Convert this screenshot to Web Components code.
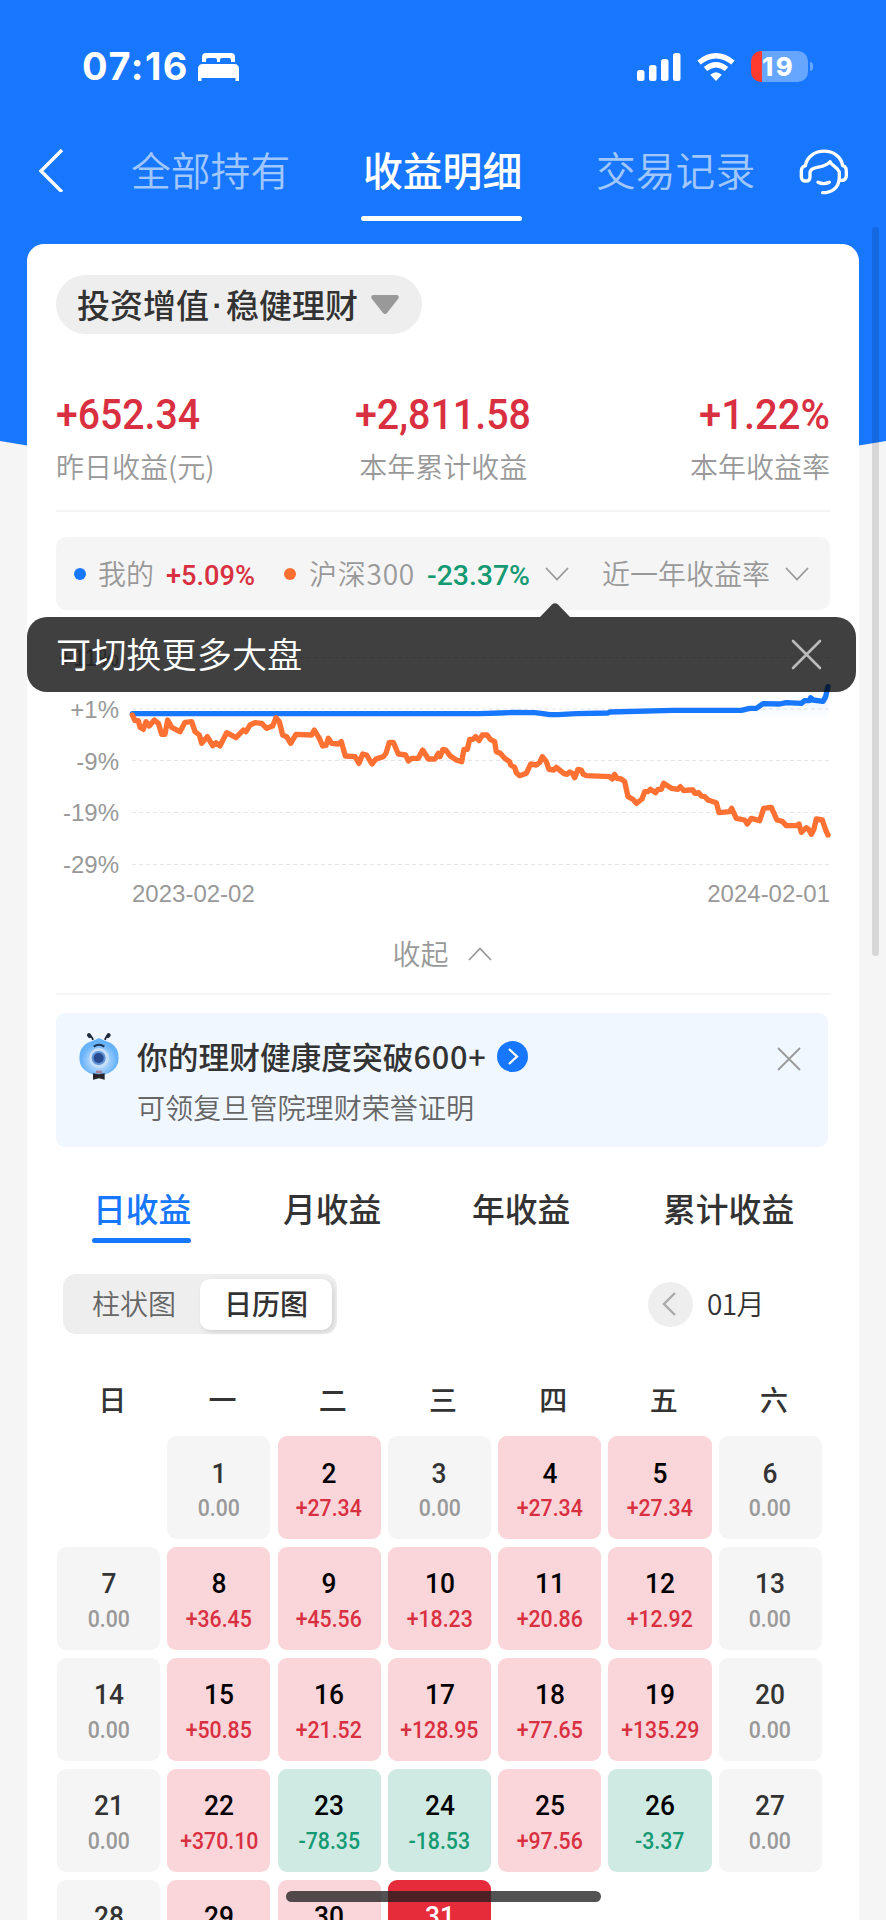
<!DOCTYPE html>
<html lang="zh-CN">
<head>
<meta charset="utf-8">
<title>收益明细</title>
<style>
html,body{margin:0;height:1920px;overflow:hidden;background:#f5f5f5}
body{font-family:"Liberation Sans","Noto Sans CJK SC",sans-serif;color:#333}
</style>
</head>
<body>
<income-page></income-page>
<script>
const CJK='"Noto Sans CJK SC",sans-serif';
const NUM='Roboto,"Noto Sans CJK SC",sans-serif';
function define(name,html,init){
  const t=document.createElement('template');
  t.innerHTML=html;
  customElements.define(name,class extends HTMLElement{
    constructor(){super();this.attachShadow({mode:'open'}).append(t.content.cloneNode(true));}
    connectedCallback(){if(init)init(this,this.shadowRoot);}
  });
}

/* Text run fitted to an advance width: by tracking, or by glyph width with "squeeze" */
define('fit-text',`<style>:host{display:inline-block;white-space:nowrap;flex:none}i{font-style:normal;display:inline-block;transform-origin:0 50%}</style><i><slot></slot></i>`,(el,r)=>{
  const w=+el.getAttribute('w'),n=[...el.textContent].length;
  const nat=el.getBoundingClientRect().width;
  if(!nat)return;
  if(el.hasAttribute('squeeze'))r.querySelector('i').style.transform=`scaleX(${(w/nat).toFixed(4)})`;
  else el.style.letterSpacing=((w-nat)/n).toFixed(3)+'px';
  el.style.width=w+'px';
});

define('status-bar',`<style>
:host{display:flex;align-items:center;height:133px;box-sizing:border-box;padding:0 73px 0 82px;color:#fff;font:750 38px/38px Inter,sans-serif}
.sp{flex:1}svg{display:block;flex:none}
.bat{position:relative;width:57px;height:31px;border-radius:10px;background:linear-gradient(90deg,#ff3b30 11px,#66a6ff 11px);font:800 25.5px/31px Inter,sans-serif;display:flex;box-sizing:border-box;padding-left:11px;margin-left:16px}
.nub{width:3px;height:9px;border-radius:0 4px 4px 0;background:#66a6ff;margin-left:2px;flex:none}
fit-text{height:40px;line-height:40px;margin-top:-1px}
.bat fit-text{height:31px;line-height:31px;margin-top:0}
</style>
<fit-text w="107">07:16</fit-text>
<svg style="margin-left:9px" width="41" height="30" viewBox="0 0 41 30" fill="#fff"><path d="M4 10V5Q4 1 8 1H33Q37 1 37 5V10H33V8Q33 6 31 6H24Q22 6 22 8V10H19V8Q19 6 17 6H10Q8 6 8 8V10Z"/><path d="M0 29V17Q0 12 5 12H36Q41 12 41 17V29H37.500V26H3.500V29Z"/></svg>
<span class="sp"></span>
<svg width="45" height="30" viewBox="0 0 45 30" fill="#fff"><rect y="18" width="7.500" height="11" rx="2.500"/><rect x="12" y="13" width="7.500" height="16" rx="2.500"/><rect x="24" y="7" width="7.500" height="22" rx="2.500"/><rect x="36" y="1" width="7.500" height="28" rx="2.500"/></svg>
<svg style="margin-left:15px" width="38" height="30" viewBox="0 0 38 30" fill="none" stroke="#fff" stroke-width="5.200"><path d="M2 10.500Q19-3 36 10.500"/><path d="M8.500 17Q19 8.500 29.500 17"/><path d="M19 29L13.200 22.800Q19 17.800 24.800 22.800Z" fill="#fff" stroke="none"/></svg>
<div class="bat"><fit-text w="33">19</fit-text></div><i class="nub"></i>`);

define('top-nav',`<style>
:host{display:grid;grid-template-columns:93px 198px 267px 200px 1fr;height:111px;padding-left:38px;box-sizing:border-box;width:886px;font:350 39.800px/76px ${CJK};color:rgba(255,255,255,.6)}
svg{display:block}
.ic{padding-top:15px}
span{white-space:nowrap}
.t{height:76px;position:relative;top:-2px}
.a{color:#fff;font-weight:500;margin-left:34px}
.a::after{content:"";display:block;height:5px;width:161px;border-radius:3px;background:#fff;margin:9px 0 0 -2px}
</style>
<svg class="ic" width="27" height="44" viewBox="0 0 27 44" fill="none" stroke="#fff" stroke-width="3.400"><path d="M24 2L3 23L24 44"/></svg>
<span class="t">全部持有</span><span class="t a">收益明细</span><span class="t">交易记录</span>
<svg class="ic" style="margin-left:2px" width="52" height="49" viewBox="1062 440 156 147" fill="none" stroke="#fff" stroke-width="10" stroke-linecap="round" stroke-linejoin="round"><path d="M1084 493C1094 435 1187 435 1196 493C1207 496 1207 503 1207 513V522C1207 536 1198 538 1187 537"/><path d="M1084 493C1072 496 1072 505 1072 515V526C1072 537 1079 539 1086 539C1095 539 1098 535 1098 526V515C1098 492 1140 504 1158 481C1164 495 1180 496 1186 512V526C1186 560 1163 574 1136 574"/><path d="M1122 543Q1139 551 1156 543"/></svg>`);

define('stat-item',`<style>
:host{display:flex;flex-direction:column;color:#999}
b{font:500 42px/50px ${NUM};color:#d93041;display:block;height:50px}
span{font:350 28px/40px ${CJK};white-space:nowrap;margin-top:6px}
:host([mid]){align-items:center}:host([end]){align-items:flex-end}
</style><b><slot name="value"></slot></b><span><slot></slot></span>`);

define('chevron-icon',`<style>:host{display:block;flex:none;width:24px;height:14px}svg{display:block}:host([up]) svg{transform:rotate(180deg)}</style><svg width="24" height="14" viewBox="0 0 24 14" fill="none" stroke="#999" stroke-width="1.800"><path d="M1 1L12 12.500L23 1"/></svg>`);

define('legend-bar',`<style>
:host{display:flex;align-items:center;height:73px;border-radius:10px;background:#f5f5f5;font:350 28px/40px ${CJK};color:#999;width:774px;box-sizing:border-box;padding-left:18px}
i{width:12px;height:12px;border-radius:50%;background:#1777ff;flex:none}
span{white-space:nowrap;position:relative;top:-1px}
.n{font:500 28px/40px ${NUM};position:relative;top:2px}
</style>
<i></i><span style="margin-left:12px;width:56px">我的</span><fit-text squeeze class="n" w="89" style="margin-left:12px;color:#d93041">+5.09%</fit-text>
<i style="background:#ff6f31;margin-left:29px"></i><fit-text w="106" style="margin-left:13px;position:relative;top:-1px">沪深300</fit-text><fit-text squeeze class="n" w="103" style="margin-left:12px;color:#149a73">-23.37%</fit-text>
<chevron-icon style="margin-left:15px"></chevron-icon><span style="margin-left:33px;width:168px">近一年收益率</span><chevron-icon style="margin-left:15px"></chevron-icon>`);

define('tip-bubble',`<style>
:host{display:flex;align-items:center;justify-content:space-between;box-sizing:border-box;width:829px;height:75px;border-radius:20px;background:rgba(0,0,0,.75);color:#fff;padding:0 34px 0 29px;font:350 35.200px/50px ${CJK}}
.arrow{position:absolute;left:513px;top:-14px}
span{position:relative;top:-2px}svg{display:block}
</style><svg class="arrow" width="30" height="14" viewBox="0 0 30 14"><path d="M0 14L12 1.500Q15-1 18 1.500L30 14Z" fill="#404040"/></svg>
<span><slot></slot></span>
<svg width="31" height="31" viewBox="0 0 31 31" stroke="#bbb" stroke-width="2.600" stroke-linecap="round"><path d="M2 2L29 29M29 2L2 29"/></svg>`);

define('yield-chart',`<style>
:host{display:grid;grid-template-columns:63px 13px 698px;grid-template-rows:260px 42px;width:774px;position:relative;font:400 24px/52px "Liberation Sans",sans-serif;color:#999}
.y{display:grid;grid-auto-rows:51.8px;text-align:right;padding-top:22px}
.plot{grid-column:3}
.x{grid-column:3;display:flex;justify-content:space-between;line-height:26px;padding-top:11px}
svg{display:block;overflow:visible}
tip-bubble{position:absolute;left:-29px;top:7px}
</style>
<div class="y"><span>+11%</span><span>+1%</span><span>-9%</span><span>-19%</span><span>-29%</span></div>
<svg class="plot" width="698" height="260" viewBox="132 610 698 260" fill="none">
<defs><linearGradient id="g" x1="0" y1="0" x2="0" y2="1"><stop stop-color="#1777ff" stop-opacity=".12"/><stop offset="1" stop-color="#1777ff" stop-opacity="0"/></linearGradient></defs>
<path d="M132 657.500H830M132 709H830M132 760.500H830M132 812.500H830M132 864.500H830" stroke="#e6e6e6" stroke-width="1" stroke-dasharray="4 3"/>
<g transform="translate(0 680) scale(.33333)" stroke-linecap="round" stroke-linejoin="round">
<path fill="url(#g)" d="M2224 91L2290 71L2400 70L2470 62L2485 20V120H2224Z"/>
<path stroke="#1777ff" stroke-width="16" d="M397 101H1439L1500 99L1544 97L1604 98L1629 101L1649 104H1674L1729 101L1824 99L1829 96L2019 91H2224L2249 85H2269L2289 71L2339 72L2359 68L2404 70L2414 62H2429L2432 53L2439 60L2469 64L2477 50L2484 20"/>
<path id="o" stroke="#ff7033" stroke-width="16"/>
</g></svg>
<div class="x"><span>2023-02-02</span><span>2024-02-01</span></div>
<tip-bubble>可切换更多大盘</tip-bubble>`,(el,r)=>{
  const a='397,105 405,122 415,122 420,142 430,148 438,125 448,138 463,120 475,130 485,163 495,163 503,120 515,142 540,155 555,127 575,125 585,155 598,165 605,190 622,170 638,197 648,188 660,198 680,158 708,173 730,150 738,155 750,135 765,128 785,130 800,145 818,138 828,113 838,125 848,165 860,170 872,190 888,163 935,165 943,150 958,175 968,198 978,196 985,175 995,190 1015,192 1024,185 1036,228 1065,230 1077,250 1088,222 1100,225 1116,252 1128,237 1150,230 1158,220 1168,187 1180,187 1195,222 1217,225 1225,243 1235,235 1255,235 1268,210 1285,237 1305,237 1315,220 1320,230 1329,208';
  const b='8,210 22,228 40,240 56,245 63,208 73,208 80,178 90,178 98,170 108,182 118,165 132,165 142,178 155,185 160,215 172,220 185,235 200,245 203,255 215,262 220,278 230,287 250,280 263,252 280,255 290,248 298,230 310,245 318,268 332,270 340,262 362,280 372,283 380,276 388,280 395,293 405,268 415,270 420,282 430,287 500,290 508,297 515,283 522,295 535,297 545,305 555,350 570,358 580,370 597,357 605,335 615,335 622,328 638,338 645,328 655,328 662,310 685,325 705,328 712,320 722,332 740,330 750,330 755,340 767,338 775,348 785,350 795,360 820,368 828,398 860,395 866,385 880,415 905,420 913,432 925,415 950,422 962,385 985,382 1002,420 1018,424 1030,437 1060,437 1068,432 1075,457 1090,443 1097,448 1105,463 1112,450 1120,417 1138,420 1148,450 1155,465';
  const second=b.split(' ').map(p=>{const[x,y]=p.split(',');return(+x+1329)+','+y});
  r.querySelector('#o').setAttribute('d','M'+a.split(' ').concat(second).join('L'));
});

define('promo-banner',`<style>
:host{display:grid;grid-template-columns:40px 1fr 24px;column-gap:18px;width:772px;height:134px;box-sizing:border-box;padding:20px 27px 0 23px;border-radius:9px;background:#f0f7ff;font-family:${CJK}}
.h{display:flex;align-items:center;font:500 30.700px/46px ${CJK};height:46px;color:#333}
.s{font:350 28.100px/40px ${CJK};color:#666;margin-top:8px}
svg{display:block}
</style>
<svg width="40" height="48" viewBox="0 0 120 144"><defs><radialGradient id="m" cx=".5" cy=".6"><stop stop-color="#d5e8fc"/><stop offset=".5" stop-color="#a3cffb"/><stop offset=".9" stop-color="#67b3fa"/></radialGradient></defs><path d="M42 21Q40 10 31 8M78 21Q80 10 88 8" fill="none" stroke="#202b3d" stroke-width="5"/><ellipse cx="31" cy="8" rx="6" ry="8" transform="rotate(-35 31 8)" fill="#202b3d"/><ellipse cx="88" cy="8" rx="6" ry="8" transform="rotate(35 88 8)" fill="#202b3d"/><path d="M60 15Q74 23 94 29Q119 42 119 75Q119 105 91 119Q60 134 29 119Q1 105 1 75Q1 42 26 29Q46 23 60 15Z" fill="url(#m)"/><circle cx="60" cy="75" r="30" fill="#c6def8"/><circle cx="59" cy="75" r="21" fill="#5f91d5"/><circle cx="59" cy="75" r="15" fill="#294b8f"/><path d="M44 41Q60 30 76 41" fill="none" stroke="#20354f" stroke-width="6"/><path d="M51 113H69V121H51Z" fill="#a5819d"/><path d="M42 121L59 124L77 121V140L60 136L42 140Z" fill="#26252b"/></svg>
<div><div class="h"><fit-text w="276.500">你的理财健康度突破</fit-text><fit-text w="73">600+</fit-text><svg style="margin-left:10px" width="31" height="31" viewBox="0 0 31 31"><circle cx="15.500" cy="15.500" r="15.500" fill="#1777ff"/><path d="M12 8L20 15.500L12 23" fill="none" stroke="#fff" stroke-width="2.300"/></svg></div><div class="s">可领复旦管院理财荣誉证明</div></div>
<svg style="margin-top:14px" width="24" height="24" viewBox="0 0 24 24" stroke="#999" stroke-width="1.800"><path d="M1 1L23 23M23 1L1 23"/></svg>`);

define('period-tabs',`<style>
:host{display:flex;height:127px;box-sizing:border-box;padding-top:37px;font:500 32.800px/48px ${CJK};color:#333}
span{white-space:nowrap;width:98px}
.a{color:#1777ff}.a::after{content:"";display:block;width:99px;height:5px;border-radius:3px;background:#1777ff;margin:6px 0 0 -1px}
</style><span class="a" style="margin-left:37px">日收益</span><span style="margin-left:92px">月收益</span><span style="margin-left:91px">年收益</span><span style="margin-left:93px;width:132px">累计收益</span>`);

define('view-switch',`<style>
:host{display:flex;align-items:center;height:60px;font:350 28px/40px ${CJK};color:#666}
.seg{display:flex;align-items:center;width:274px;height:60px;box-sizing:border-box;padding-left:29px;background:#eee;border-radius:13px;margin-left:7px}
.on{width:132px;height:51px;border-radius:10px;background:#fff;color:#333;font-weight:500;box-shadow:2px 2px 5px rgba(0,0,0,.12);display:flex;align-items:center;justify-content:center;margin-left:24px}
.seg span{position:relative;top:-1px}
.c{width:45px;height:45px;border-radius:50%;background:#eee;margin-left:311px;display:flex;align-items:center;justify-content:center}
fit-text{color:#333;margin-left:14px;position:relative;top:-1px}
</style><div class="seg"><span>柱状图</span><div class="on"><span>日历图</span></div></div>
<div class="c"><svg style="margin-right:4px" width="14" height="24" viewBox="0 0 14 24" fill="none" stroke="#aaa" stroke-width="2.400"><path d="M13 1L2 12L13 23"/></svg></div><fit-text w="57">01月</fit-text>`);

define('day-cell',`<style>
:host{display:flex;flex-direction:column;align-items:center;height:103.100px;box-sizing:border-box;padding-top:23.500px;border-radius:9px;background:#f5f5f5;color:#999}
b{font:500 28px/28px ${NUM};color:#333;height:35.500px;transform:scaleX(.94);flex:none}
span{font:500 23px/28px ${NUM};transform:scaleX(.925)}
:host([kind=up]){background:#fad5d9;color:#d93041}
:host([kind=down]){background:#cfeae2;color:#149a73}
:host([kind]) b{color:#000}
:host([kind=now]){background:#e62c3b;color:#fff}
:host([kind=now]) b{color:#fff}
:host([kind=none]){background:none}
</style><b><slot name="day"></slot></b><span><slot></slot></span>`);

define('profit-calendar',`<style>
:host{display:block;padding:43px 0 0 1px}
.w{display:grid;grid-template-columns:repeat(7,110.300px);font:500 28px/44px ${CJK};color:#333;text-align:center;height:59px}
.d{display:grid;grid-template-columns:repeat(7,103.200px);column-gap:7.100px;row-gap:7.900px}
</style><div class="w"></div><div class="d"></div>`,(el,r)=>{
  r.querySelector('.w').innerHTML=[...'日一二三四五六'].map(c=>`<span>${c}</span>`).join('');
  const v=('0.00 +27.34 0.00 +27.34 +27.34 0.00 0.00 +36.45 +45.56 +18.23 +20.86 +12.92 0.00 0.00 +50.85 +21.52 +128.95 +77.65 +135.29 0.00 0.00 +370.10 -78.35 -18.53 +97.56 -3.37 0.00').split(' ');
  let h='<day-cell kind="none"></day-cell>';
  for(let i=1;i<=31;i++){
    const s=v[i-1]||'';
    const k=i===31?'now':(i===29||i===30||s[0]==='+')?'up':s[0]==='-'?'down':'';
    h+=`<day-cell${k?` kind="${k}"`:''}><i slot="day" style="font-style:normal">${i}</i>${s}</day-cell>`;
  }
  r.querySelector('.d').innerHTML=h;
});

define('income-page',`<style>
:host{display:block;width:886px;height:1920px;overflow:hidden;position:relative;background:#f5f5f5;isolation:isolate}
.bg{position:absolute;left:0;top:0;z-index:-1;display:block}
.card{margin-left:27px;width:832px;height:1700px;background:#fff;border-radius:17px 17px 0 0;box-sizing:border-box;padding:31px 29px 0;display:flex;flex-direction:column;align-items:flex-start}
.card>*{flex:none}
.pill{display:flex;align-items:center;width:366px;height:59px;border-radius:30px;background:#eee;box-sizing:border-box;padding-left:21px;font:500 33px/48px ${CJK};color:#333}
.pill fit-text{position:relative;top:-1px}
.dot{width:17px;text-align:center;font:700 30px/40px "Liberation Sans",sans-serif;position:relative;top:1px}
.stats{display:flex;justify-content:space-between;width:774px;margin-top:56px;height:120px}
.hr{height:2px;background:#f5f5f5;width:775px}
.fold{display:flex;align-items:center;justify-content:center;gap:19px;width:756px;padding-left:8px;margin-top:22px;height:40px;font:350 28px/40px ${CJK};color:#999}
.bar{position:absolute;left:872px;top:227px;width:7px;height:729px;border-radius:4px;background:rgba(0,0,0,.12)}
.home{position:absolute;left:286px;top:1891px;width:315px;height:11px;border-radius:6px;background:rgba(30,30,30,.77)}
</style>
<svg class="bg" width="886" height="500"><path d="M0 0H886V441Q443 520 0 441Z" fill="#1777ff"/></svg>
<status-bar></status-bar><top-nav></top-nav>
<div class="card">
<div class="pill"><fit-text w="132">投资增值</fit-text><span class="dot">·</span><fit-text w="132">稳健理财</fit-text><svg style="margin-left:13px" width="28" height="20" viewBox="0 0 28 20"><path d="M2 0H26Q29 1 27 4L16 18Q14 20 12 18L1 4Q-1 1 2 0Z" fill="#999"/></svg></div>
<div class="stats"><stat-item><fit-text squeeze slot="value" w="144">+652.34</fit-text>昨日收益(元)</stat-item><stat-item mid style="margin-left:-18px"><fit-text squeeze slot="value" w="176">+2,811.58</fit-text>本年累计收益</stat-item><stat-item end><fit-text squeeze slot="value" w="131">+1.22%</fit-text>本年收益率</stat-item></div>
<div class="hr"></div>
<legend-bar style="margin-top:25px"></legend-bar>
<yield-chart></yield-chart>
<div class="fold"><span style="position:relative;top:-1px">收起</span><chevron-icon up></chevron-icon></div>
<div class="hr" style="margin-top:19px"></div>
<promo-banner style="margin-top:18px"></promo-banner>
<period-tabs></period-tabs>
<view-switch></view-switch>
<profit-calendar></profit-calendar>
</div>
<i class="bar"></i><i class="home"></i>`);
</script>
</body>
</html>
